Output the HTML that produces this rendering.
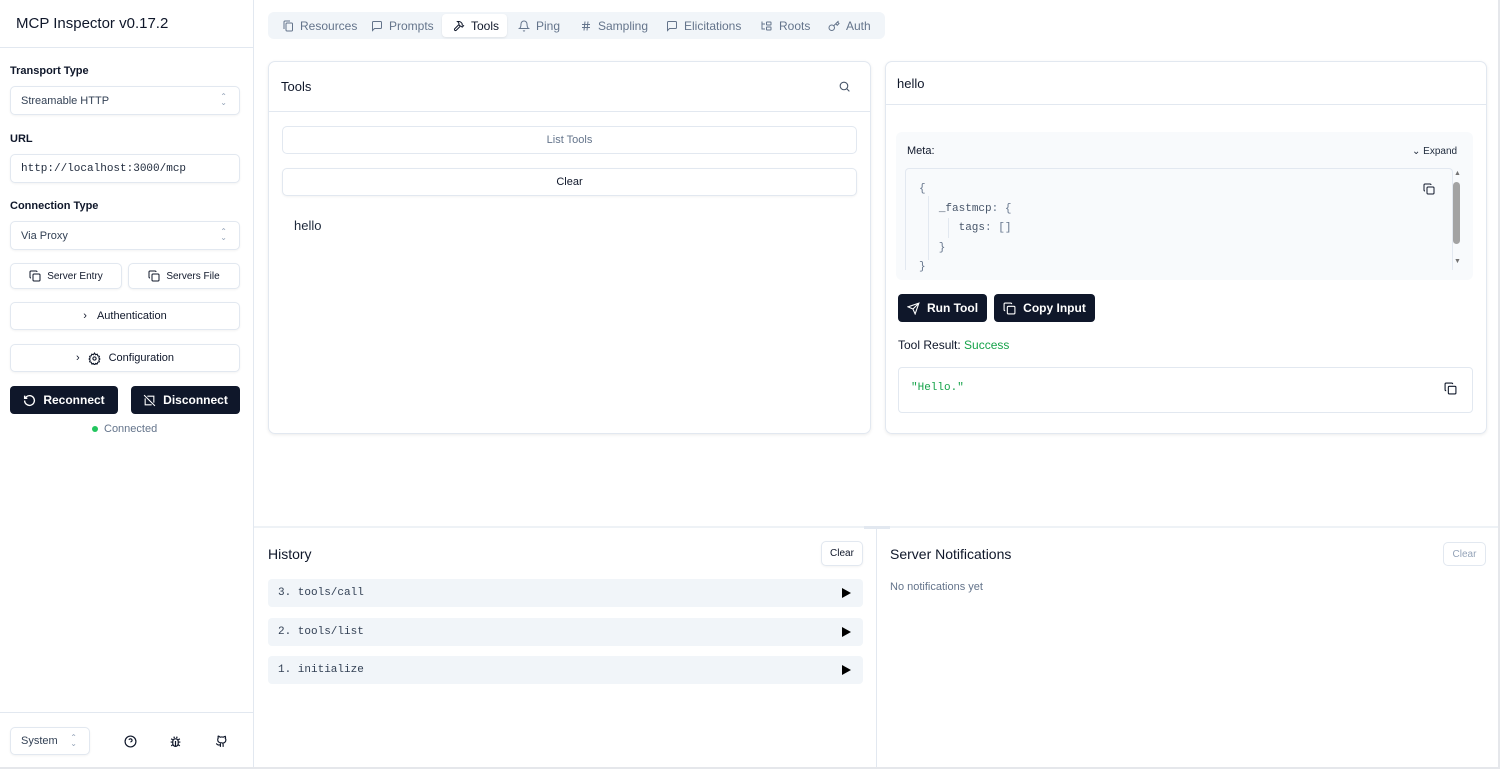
<!DOCTYPE html>
<html><head><meta charset="utf-8"><style>
*{box-sizing:border-box;margin:0;padding:0}
body{width:1500px;height:769px;font-family:"Liberation Sans",sans-serif;color:#0f172a;background:#fff;position:relative;overflow:hidden;font-size:12px}
.a{position:absolute}
.mono{font-family:"Liberation Mono",monospace}
.inp{position:absolute;border:1px solid #e2e8f0;border-radius:5px;background:#fff;box-shadow:0 1px 2px rgba(0,0,0,.05);display:flex;align-items:center}
.btn{justify-content:center;gap:6px}
.dark{position:absolute;background:#0f172a;color:#fff;border-radius:4px;display:flex;align-items:center;justify-content:center;gap:7px;font-weight:bold;font-size:12px}
.lbl{position:absolute;left:10px;font-size:11px;font-weight:bold;color:#0f172a}
svg{display:block}
.tab{position:absolute;top:12px;height:27px;display:flex;align-items:center;gap:6px;color:#64748b;font-size:12px}
.row{position:absolute;left:268px;width:595px;height:28px;background:#f1f5f9;border-radius:4px;display:flex;align-items:center;padding-left:10px;font-size:11px;color:#334155}
.row .tri{position:absolute;right:12px;top:9px;width:0;height:0;border-left:9px solid #000;border-top:5px solid transparent;border-bottom:5px solid transparent}
</style></head><body>
<!-- sidebar -->
<div class="a" style="left:253px;top:0;width:1px;height:769px;background:#e2e8f0"></div>
<div class="a" style="left:0;top:47px;width:253px;height:1px;background:#e2e8f0"></div>
<div class="a" style="left:16px;top:15px;font-size:15px;font-weight:500">MCP Inspector v0.17.2</div>
<div class="lbl" style="top:65px">Transport Type</div>
<div class="inp" style="left:10px;top:86px;width:230px;height:29px;padding-left:10px;font-size:11px;color:#334155">Streamable HTTP<span class="a" style="right:12px;top:7px;color:#94a3b8;font-size:8px;line-height:6px">⌃<br>⌄</span></div>
<div class="lbl" style="top:133px">URL</div>
<div class="inp mono" style="left:10px;top:154px;width:230px;height:29px;padding-left:10px;font-size:11px;color:#1e293b">http://localhost:3000/mcp</div>
<div class="lbl" style="top:200px">Connection Type</div>
<div class="inp" style="left:10px;top:221px;width:230px;height:29px;padding-left:10px;font-size:11px;color:#334155">Via Proxy<span class="a" style="right:12px;top:7px;color:#94a3b8;font-size:8px;line-height:6px">⌃<br>⌄</span></div>
<div class="inp btn" style="left:10px;top:263px;width:112px;height:26px;font-size:10px;font-weight:500"><svg width="12" height="12" viewBox="0 0 24 24" fill="none" stroke="#0f172a" stroke-width="2"><rect x="8" y="8" width="14" height="14" rx="2"/><path d="M4 16c-1.1 0-2-.9-2-2V4c0-1.1.9-2 2-2h10c1.1 0 2 .9 2 2"/></svg>Server Entry</div>
<div class="inp btn" style="left:128px;top:263px;width:112px;height:26px;font-size:10px;font-weight:500"><svg width="12" height="12" viewBox="0 0 24 24" fill="none" stroke="#0f172a" stroke-width="2"><rect x="8" y="8" width="14" height="14" rx="2"/><path d="M4 16c-1.1 0-2-.9-2-2V4c0-1.1.9-2 2-2h10c1.1 0 2 .9 2 2"/></svg>Servers File</div>
<div class="inp btn" style="left:10px;top:302px;width:230px;height:28px;font-size:11px;font-weight:500;gap:10px"><span>›</span>Authentication</div>
<div class="inp btn" style="left:10px;top:344px;width:230px;height:28px;font-size:11px;font-weight:500;gap:8px"><span>›</span><svg width="13" height="13" viewBox="0 0 24 24" fill="none" stroke="#0f172a" stroke-width="2"><circle cx="12" cy="12" r="3"/><path d="M12 2l2 3 3-1 1 3 3 1-1 3 2 2-2 2 1 3-3 1-1 3-3-1-2 3-2-3-3 1-1-3-3-1 1-3-2-2 2-2-1-3 3-1 1-3 3 1z"/></svg>Configuration</div>
<div class="dark" style="left:10px;top:386px;width:108px;height:28px"><svg width="13" height="13" viewBox="0 0 24 24" fill="none" stroke="#fff" stroke-width="2.5"><path d="M3 12a9 9 0 1 0 3-6.7L3 8"/><path d="M3 3v5h5"/></svg>Reconnect</div>
<div class="dark" style="left:131px;top:386px;width:109px;height:28px"><svg width="13" height="13" viewBox="0 0 24 24" fill="none" stroke="#fff" stroke-width="2"><path d="M2 2l20 20M8 4h12v12M4 8v12h12"/></svg>Disconnect</div>
<div class="a" style="left:92px;top:426px;width:6px;height:6px;border-radius:50%;background:#22c55e"></div>
<div class="a" style="left:104px;top:423px;font-size:11px;color:#64748b">Connected</div>
<div class="a" style="left:0;top:712px;width:253px;height:1px;background:#e2e8f0"></div>
<div class="inp" style="left:10px;top:727px;width:80px;height:28px;padding-left:10px;font-size:11px;color:#334155">System<span class="a" style="right:12px;top:7px;color:#94a3b8;font-size:8px;line-height:6px">⌃<br>⌄</span></div>
<div class="a" style="left:124px;top:735px"><svg width="13" height="13" viewBox="0 0 24 24" fill="none" stroke="#0f172a" stroke-width="2.2"><circle cx="12" cy="12" r="10"/><path d="M9.1 9a3 3 0 0 1 5.8 1c0 2-3 3-3 3M12 17h.01"/></svg></div>
<div class="a" style="left:169px;top:735px"><svg width="13" height="13" viewBox="0 0 24 24" fill="none" stroke="#0f172a" stroke-width="2.2"><rect x="7" y="7" width="10" height="14" rx="5"/><path d="M12 21V11M3 13h4M17 13h4M4 7l3 2M20 7l-3 2M4 20l3-2M20 20l-3-2M9 3l1 3M15 3l-1 3"/></svg></div>
<div class="a" style="left:215px;top:735px"><svg width="13" height="13" viewBox="0 0 24 24" fill="none" stroke="#0f172a" stroke-width="2.2"><path d="M15 22v-4a4 4 0 0 0-1-3c3 0 6-2 6-5.5a4.5 4.5 0 0 0-1-3.5 4 4 0 0 0 0-3.5s-1 0-3.5 1.5a12 12 0 0 0-6 0C7 2 6 2 6 2a4 4 0 0 0 0 3.5A4.5 4.5 0 0 0 5 9c0 3.5 3 5.5 6 5.5a4 4 0 0 0-1 3V22M9 18c-4.5 2-5-2-7-2"/></svg></div>

<!-- tabs -->
<div class="a" style="left:268px;top:12px;width:617px;height:27px;background:#f1f5f9;border-radius:6px"></div>
<div class="a" style="left:442px;top:14px;width:65px;height:23px;background:#fff;border-radius:4px;box-shadow:0 1px 2px rgba(0,0,0,.08)"></div>
<div class="tab" style="left:282px"><svg width="12" height="12" viewBox="0 0 24 24" fill="none" stroke="#64748b" stroke-width="2"><rect x="8" y="6" width="13" height="16" rx="2"/><path d="M4 18V4c0-1 1-2 2-2h10"/></svg>Resources</div>
<div class="tab" style="left:371px"><svg width="12" height="12" viewBox="0 0 24 24" fill="none" stroke="#64748b" stroke-width="2"><path d="M21 15a2 2 0 0 1-2 2H7l-4 4V5a2 2 0 0 1 2-2h14a2 2 0 0 1 2 2z"/></svg>Prompts</div>
<div class="tab" style="left:453px;color:#0f172a"><svg width="12" height="12" viewBox="0 0 24 24" fill="none" stroke="#0f172a" stroke-width="2"><path d="M15 12l-8.5 8.5a2.1 2.1 0 0 1-3-3L12 9M17.6 15L22 10.6M20 11l-1.3-1.3a2 2 0 0 1-.6-1.4V6.8l-2.3-2.3A6 6 0 0 0 11.6 3H9l.9.8A6.6 6.6 0 0 1 12 8.6V10l2 2h1.2a2 2 0 0 1 1.4.6L18 14"/></svg>Tools</div>
<div class="tab" style="left:518px"><svg width="12" height="12" viewBox="0 0 24 24" fill="none" stroke="#64748b" stroke-width="2"><path d="M6 8a6 6 0 0 1 12 0c0 7 3 9 3 9H3s3-2 3-9M10.3 21a1.9 1.9 0 0 0 3.4 0"/></svg>Ping</div>
<div class="tab" style="left:580px"><svg width="12" height="12" viewBox="0 0 24 24" fill="none" stroke="#64748b" stroke-width="2"><path d="M4 9h16M4 15h16M10 3L8 21M16 3l-2 18"/></svg>Sampling</div>
<div class="tab" style="left:666px"><svg width="12" height="12" viewBox="0 0 24 24" fill="none" stroke="#64748b" stroke-width="2"><path d="M21 15a2 2 0 0 1-2 2H7l-4 4V5a2 2 0 0 1 2-2h14a2 2 0 0 1 2 2z"/></svg>Elicitations</div>
<div class="tab" style="left:760px"><svg width="13" height="12" viewBox="0 0 24 24" fill="none" stroke="#64748b" stroke-width="2"><path d="M3 3v15h6M3 8h6"/><rect x="12" y="4" width="9" height="6" rx="1"/><rect x="12" y="14" width="9" height="6" rx="1"/></svg>Roots</div>
<div class="tab" style="left:828px"><svg width="12" height="12" viewBox="0 0 24 24" fill="none" stroke="#64748b" stroke-width="2"><circle cx="7.5" cy="15.5" r="5.5"/><path d="M21 2l-9.6 9.6M15.5 7.5l3 3L22 7l-3-3"/></svg>Auth</div>

<!-- tools card -->
<div class="a" style="left:268px;top:61px;width:603px;height:373px;border:1px solid #e2e8f0;border-radius:7px;box-shadow:0 1px 3px rgba(0,0,0,.08)"></div>
<div class="a" style="left:268px;top:111px;width:603px;height:1px;background:#e2e8f0"></div>
<div class="a" style="left:281px;top:79px;font-size:13px;font-weight:500">Tools</div>
<div class="a" style="left:838px;top:80px"><svg width="13" height="13" viewBox="0 0 24 24" fill="none" stroke="#475569" stroke-width="2"><circle cx="11" cy="11" r="7"/><path d="M21 21l-5-5"/></svg></div>
<div class="inp btn" style="left:282px;top:126px;width:575px;height:28px;font-size:11px;color:#64748b;box-shadow:none">List Tools</div>
<div class="inp btn" style="left:282px;top:168px;width:575px;height:28px;font-size:11px;font-weight:500">Clear</div>
<div class="a" style="left:294px;top:218px;font-size:13px;color:#1e293b">hello</div>

<!-- right card -->
<div class="a" style="left:885px;top:61px;width:602px;height:373px;border:1px solid #e2e8f0;border-radius:7px;box-shadow:0 1px 3px rgba(0,0,0,.08)"></div>
<div class="a" style="left:885px;top:104px;width:602px;height:1px;background:#e2e8f0"></div>
<div class="a" style="left:897px;top:76px;font-size:13px;font-weight:500">hello</div>
<div class="a" style="left:896px;top:132px;width:577px;height:148px;background:#f8fafc;border-radius:6px"></div>
<div class="a" style="left:907px;top:145px;font-size:11px;font-weight:500">Meta:</div>
<div class="a" style="left:1412px;top:146px;font-size:10px;color:#1e293b">⌄ Expand</div>
<div class="a" style="left:905px;top:168px;width:548px;height:102px;border:1px solid #e2e8f0;border-bottom:none;border-radius:4px 4px 0 0"></div>
<div class="a mono" style="left:919px;top:180px;font-size:11px;color:#64748b;line-height:19.5px;white-space:pre">{
   <span style="color:#475569">_fastmcp</span>: {
      <span style="color:#475569">tags</span>: []
   }
}</div>
<div class="a" style="left:928px;top:196px;width:1px;height:64px;background:#e2e8f0"></div>
<div class="a" style="left:948px;top:218px;width:1px;height:20px;background:#e2e8f0"></div>
<div class="a" style="left:1423px;top:183px"><svg width="12" height="12" viewBox="0 0 24 24" fill="none" stroke="#0f172a" stroke-width="2"><rect x="8" y="8" width="14" height="14" rx="2"/><path d="M4 16c-1.1 0-2-.9-2-2V4c0-1.1.9-2 2-2h10c1.1 0 2 .9 2 2"/></svg></div>
<div class="a" style="left:1453px;top:182px;width:7px;height:62px;background:#a3a3a3;border-radius:4px"></div>
<div class="a" style="left:1454px;top:170px;font-size:7px;color:#737373">▲</div>
<div class="a" style="left:1454px;top:258px;font-size:7px;color:#737373">▼</div>
<div class="dark" style="left:898px;top:294px;width:89px;height:28px"><svg width="13" height="13" viewBox="0 0 24 24" fill="none" stroke="#fff" stroke-width="2"><path d="M22 2L11 13M22 2l-7 20-4-9-9-4z"/></svg>Run Tool</div>
<div class="dark" style="left:994px;top:294px;width:101px;height:28px"><svg width="13" height="13" viewBox="0 0 24 24" fill="none" stroke="#fff" stroke-width="2"><rect x="8" y="8" width="14" height="14" rx="2"/><path d="M4 16c-1.1 0-2-.9-2-2V4c0-1.1.9-2 2-2h10c1.1 0 2 .9 2 2"/></svg>Copy Input</div>
<div class="a" style="left:898px;top:338px;font-size:12px;font-weight:500">Tool Result: <span style="color:#16a34a">Success</span></div>
<div class="a" style="left:898px;top:367px;width:575px;height:46px;border:1px solid #e2e8f0;border-radius:4px"></div>
<div class="a mono" style="left:911px;top:382px;font-size:11px;color:#16a34a">"Hello."</div>
<div class="a" style="left:1444px;top:382px"><svg width="13" height="13" viewBox="0 0 24 24" fill="none" stroke="#0f172a" stroke-width="2"><rect x="8" y="8" width="14" height="14" rx="2"/><path d="M4 16c-1.1 0-2-.9-2-2V4c0-1.1.9-2 2-2h10c1.1 0 2 .9 2 2"/></svg></div>

<!-- bottom -->
<div class="a" style="left:254px;top:526px;width:1246px;height:2px;background:#eef2f6"></div>
<div class="a" style="left:864px;top:526px;width:26px;height:3px;background:#e2e8f0"></div>
<div class="a" style="left:876px;top:528px;width:1px;height:241px;background:#e2e8f0"></div>
<div class="a" style="left:268px;top:546px;font-size:14px;font-weight:500">History</div>
<div class="inp btn" style="left:821px;top:541px;width:42px;height:25px;font-size:10px;font-weight:500">Clear</div>
<div class="row mono" style="top:579px">3. tools/call<span class="tri"></span></div>
<div class="row mono" style="top:618px">2. tools/list<span class="tri"></span></div>
<div class="row mono" style="top:656px">1. initialize<span class="tri"></span></div>
<div class="a" style="left:890px;top:546px;font-size:14px;font-weight:500">Server Notifications</div>
<div class="inp btn" style="left:1443px;top:542px;width:43px;height:24px;font-size:10px;color:#94a3b8;box-shadow:none">Clear</div>
<div class="a" style="left:890px;top:581px;font-size:11px;color:#64748b">No notifications yet</div>
<div class="a" style="left:1498px;top:0;width:2px;height:769px;background:#e5e7eb"></div>
<div class="a" style="left:0;top:767px;width:1500px;height:2px;background:#e5e7eb"></div>
</body></html>
